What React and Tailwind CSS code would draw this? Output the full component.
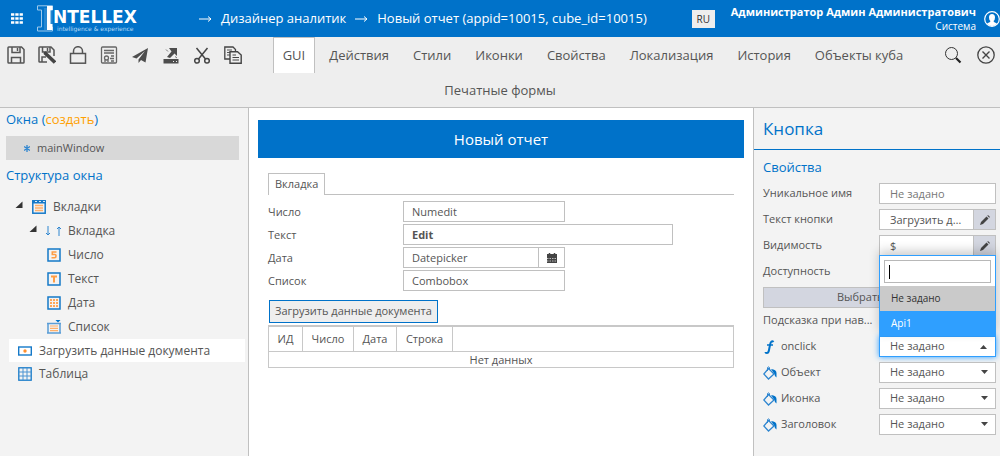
import React from "react";

const Svg = ({ w = 18, h = 18, children, className = "" }) => (
  <svg
    width={w}
    height={h}
    viewBox={`0 0 ${w} ${h}`}
    fill="none"
    className={`shrink-0 ${className}`}
    aria-hidden="true"
  >
    {children}
  </svg>
);

const Floppy = () => (
  <g stroke="#555" strokeWidth="1.5">
    <path d="M1 1.8Q1 1 1.8 1H14.5L17 3.500V16.200Q17 17 16.200 17H1.800Q1 17 1 16.200Z" />
    <path d="M5 1V6.500H13V1M10.500 2V5" />
    <path d="M4.500 17V11.500H13.500V17" />
  </g>
);

const toolbarIcons = [
  { title: "Сохранить", icon: <Svg><Floppy /></Svg> },
  {
    title: "Сохранить как",
    icon: (
      <Svg>
        <g stroke="#555" strokeWidth="1.5">
          <path d="M1 1.800Q1 1 1.800 1H13L16 4V10M1 1.800V15.500Q1 16 1.800 16H9" />
          <path d="M4.500 1V6H12V1M9.500 2V5M4 16V11H8" />
        </g>
        <path d="M6.500 6.500L17 16.500" stroke="#444" strokeWidth="3.500" />
        <path d="M5.500 5.500L7 9L9 7Z" fill="#444" />
      </Svg>
    ),
  },
  {
    title: "Блокировка",
    icon: (
      <Svg>
        <g stroke="#555" strokeWidth="1.5">
          <rect x="1.500" y="7.500" width="15" height="9.700" />
          <path d="M4.500 7.500V5.200A4.500 4.500 0 0 1 13.500 5.200V7.500" />
        </g>
      </Svg>
    ),
  },
  {
    title: "Сертификат",
    icon: (
      <Svg>
        <g stroke="#666" strokeWidth="1.3">
          <rect x="1.500" y="1" width="15" height="16" rx="1" />
          <path d="M4 4.500H14M4 7H14M11 10H14M10 12.500H14M11 15H14" />
          <circle cx="6.500" cy="12" r="2" />
          <path d="M5 14V16M8 14V16" />
        </g>
      </Svg>
    ),
  },
  {
    title: "Отправить",
    icon: (
      <Svg>
        <path d="M17 2L1 11L5.500 12.500L14 5L7.500 13.500V17L10 14L14.500 16.500Z" fill="#4d4d4d" />
      </Svg>
    ),
  },
  {
    title: "Выгрузить",
    icon: (
      <Svg>
        <path d="M1.500 13H16.500V17.500H1.500Z" fill="#4d4d4d" />
        <path d="M11 15.500H12M14 15.500H15" stroke="#eee" />
        <path d="M7 2H15V10L12.500 7.500L8 12L5 11L9.500 5.500Z" fill="#4d4d4d" />
        <path d="M4 3.500L6 5.500M13 10.500L15 12" stroke="#777" />
      </Svg>
    ),
  },
  {
    title: "Вырезать",
    icon: (
      <Svg>
        <g stroke="#444" strokeWidth="1.5">
          <path d="M3.500 2L12.500 13M14.500 2L5.500 13" />
          <circle cx="4" cy="14.800" r="2.300" />
          <circle cx="14" cy="14.800" r="2.300" />
        </g>
      </Svg>
    ),
  },
  {
    title: "Копировать",
    icon: (
      <Svg>
        <path d="M.8 1H9L11.500 3.500V13H.8Z" stroke="#444" strokeWidth="1.300" />
        <path d="M3 4H8M3 6.500H8M3 9H8" stroke="#555" />
        <path d="M6 5.800H13.500L17.200 9V17.200H6Z" fill="#eee" stroke="#444" strokeWidth="1.400" />
        <path d="M8.500 9H12M8.500 11.500H15M8.500 14H15" stroke="#444" />
      </Svg>
    ),
  },
];

const tabs = ["GUI", "Действия", "Стили", "Иконки", "Свойства", "Локализация", "История", "Объекты куба"];

const boxFrame = <rect x="1" y="1" width="12" height="12" stroke="#1579c8" strokeWidth="1.500" />;

const treeIcons = {
  tabs: (
    <Svg w={14} h={14}>
      <rect x=".8" y=".8" width="12.400" height="12.400" stroke="#1579c8" strokeWidth="1.500" />
      <path d="M0 2H14" stroke="#1579c8" strokeWidth="3" />
      <path d="M3 1.500H5M7 1.500H9M11 1.500H13" stroke="#dcebf7" />
      <path d="M3 5.500H11M3 8H11M3 10.500H11" stroke="#ffb06a" strokeWidth="1.300" />
    </Svg>
  ),
  number: (
    <Svg w={14} h={14}>
      {boxFrame}
      <path d="M9.500 4H5.300V6.500H8Q9 6.500 9 8Q9 9.800 7.500 9.800H4.500" stroke="#ff9d45" strokeWidth="1.600" />
    </Svg>
  ),
  text: (
    <Svg w={14} h={14}>
      {boxFrame}
      <path d="M4 4.500H10M7 4.500V10.500" stroke="#ff9d45" strokeWidth="2" />
    </Svg>
  ),
  date: (
    <Svg w={14} h={14}>
      {boxFrame}
      <path d="M3 4H11M3 7H11M3 10H11" stroke="#ffa85a" strokeWidth="2" strokeDasharray="2 1" />
    </Svg>
  ),
  list: (
    <Svg w={14} h={14}>
      <path d="M8.500 0H13.500L11 2.500Z" fill="#0072c9" />
      <path d="M0 3.500H14M0 13H14" stroke="#5a9dd6" strokeWidth="1.500" />
      <path d="M1 3.500V13M13 3.500V13" stroke="#5a9dd6" strokeWidth="1.500" />
      <path d="M3 6H11M3 8.300H11M3 10.600H11" stroke="#ffb06a" strokeWidth="1.200" />
    </Svg>
  ),
  button: (
    <Svg w={14} h={14}>
      <rect x=".7" y="3" width="12.600" height="8" stroke="#1579c8" strokeWidth="1.400" />
      <circle cx="7" cy="7" r="1.700" fill="#ff8f2e" />
    </Svg>
  ),
  table: (
    <Svg w={14} h={14}>
      <rect x=".8" y=".8" width="12.400" height="12.400" stroke="#1579c8" strokeWidth="1.300" />
      <path d="M5 1V13M9 1V13M1 5H13M1 9H13" stroke="#4a93d2" />
    </Svg>
  ),
};

const treeItems = [
  { label: "Число", icon: treeIcons.number },
  { label: "Текст", icon: treeIcons.text },
  { label: "Дата", icon: treeIcons.date },
  { label: "Список", icon: treeIcons.list },
];

const Expander = () => (
  <Svg w={8} h={8} className="self-start mt-[6px]">
    <path d="M7.500 .5V7H.5Z" fill="#333" />
  </Svg>
);

const Arrow = () => (
  <Svg w={13} h={8}>
    <path d="M0 4H12M9 1.500L12 4L9 6.500" stroke="#fff" />
  </Svg>
);

const Header = () => (
  <header className="flex h-[37px] items-center bg-[#0072c9] text-white">
    <button type="button" aria-label="Меню" className="ml-[11px]">
      <Svg w={12} h={11}>
        <path d="M0 1.500H12M0 5.500H12M0 9.500H12" stroke="#fff" strokeWidth="2.500" strokeDasharray="3.300 1" />
      </Svg>
    </button>
    <div className="ml-[14px] flex w-[160px] font-['DejaVu_Sans',sans-serif]">
      <Svg w={16} h={27}>
        <path d="M.5 .8H15.500V5H12V22H15.500V26H.5V22H4.500V5H.5Z" stroke="#9cc9ec" />
        <path d="M7 3H15.500V23H11V25H7Z" fill="#fff" opacity=".15" />
        <path d="M10 1H15.500V5H13.500V19H15.500V25H10Z" fill="#fff" />
      </Svg>
      <div className="whitespace-nowrap">
        <div className="mt-[3px] text-[17px] leading-[18px] font-bold">NTELLEX</div>
        <div className="ml-1 text-[6px] leading-[6px] text-[#b5d8f3]">intelligence &amp; experience</div>
      </div>
    </div>
    <nav className="ml-[2px] flex items-center gap-[9px] text-[13px] whitespace-nowrap">
      <Arrow />
      <a href="#designer">Дизайнер аналитик</a>
      <Arrow />
      <a href="#report">Новый отчет (appid=10015, cube_id=10015)</a>
    </nav>
    <button type="button" className="ml-auto h-[18px] w-[23px] bg-[#eee] text-[10px] leading-[18px] text-[#333]">
      RU
    </button>
    <div className="ml-4 text-right whitespace-nowrap">
      <div className="text-[11px] leading-[15px] font-bold">Администратор Админ Администратович</div>
      <div className="text-[10px] leading-[14px]">Система</div>
    </div>
    <Svg w={16} h={16} className="ml-[8px]">
      <circle cx="8" cy="8" r="7.300" stroke="#fff" strokeWidth="1.200" />
      <path
        d="M8 3Q11 3 11 6.500Q11 9 9.500 10Q9.500 11 13 12.500Q11 15 8 15Q5 15 3 12.500Q6.500 11 6.500 10Q5 9 5 6.500Q5 3 8 3Z"
        fill="#fff"
      />
    </Svg>
  </header>
);

const Toolbar = () => (
  <div className="h-[71px] border-b border-[#c0c0c0] bg-[#eee]">
    <div className="flex h-9 items-center">
      <div className="ml-[7px] flex gap-[13px]">
        {toolbarIcons.map((item) => (
          <button key={item.title} type="button" title={item.title}>
            {item.icon}
          </button>
        ))}
      </div>
      <nav className="flex flex-1 justify-center gap-1 text-[13px] leading-[35px] whitespace-nowrap">
        {tabs.map((tab, index) => (
          <a
            key={tab}
            href="#tab"
            className={
              index === 0
                ? "border border-b-0 border-[#c0c0c0] bg-white px-[9px]"
                : "border border-b-0 border-transparent px-[9px]"
            }
          >
            {tab}
          </a>
        ))}
      </nav>
      <div className="mr-[5px] flex items-center gap-[15px]">
        <button type="button" title="Поиск">
          <Svg>
            <circle cx="7.500" cy="7.500" r="6" stroke="#333" />
            <path d="M12 12L16.500 16.500" stroke="#222" strokeWidth="2.200" />
          </Svg>
        </button>
        <button type="button" title="Закрыть">
          <Svg>
            <circle cx="9" cy="9" r="8.200" stroke="#444" strokeWidth="1.300" />
            <path d="M5.500 5.500L12.500 12.500M12.500 5.500L5.500 12.500" stroke="#444" strokeWidth="1.400" />
          </Svg>
        </button>
      </div>
    </div>
    <nav className="text-center text-[13px] leading-[34px]">
      <a href="#print">Печатные формы</a>
    </nav>
  </div>
);

const LeftPanel = () => (
  <aside className="w-[249px] shrink-0 border-r border-[#c0c0c0] bg-[#f3f3f3]">
    <h2 className="px-[6px] pt-px text-[13px] leading-5 text-[#0072c9]">
      Окна (<a href="#create" className="text-[#ffa000]">создать</a>)
    </h2>
    <div className="mt-[7px] mr-[9px] ml-[6px] flex h-6 items-center gap-[7px] bg-[#d8d8d8] pl-[18px] text-[11px]">
      <Svg w={6} h={7}>
        <path d="M3 0V7M0 1.500L6 5.500M6 1.500L0 5.500" stroke="#2f86d0" strokeWidth="1.300" />
      </Svg>
      mainWindow
    </div>
    <h2 className="mt-[5px] px-[6px] text-[13px] leading-5 text-[#0072c9]">Структура окна</h2>
    <ul className="mt-[10px] mr-[3px] ml-[9px] text-xs whitespace-nowrap">
      <li className="flex h-6 items-center pl-[6px]">
        <Expander />
        <span className="ml-[9px] flex items-center gap-[7px]">
          {treeIcons.tabs}
          Вкладки
        </span>
      </li>
      <li className="flex h-6 items-center pl-5">
        <Expander />
        <span className="ml-[8px] flex items-center gap-[7px]">
          <Svg w={16} h={10}>
            <path d="M3 0V9M1 7L3 9L5 7M14 10V1M12 3L14 1L16 3" stroke="#2f86d0" />
          </Svg>
          Вкладка
        </span>
      </li>
      {treeItems.map((item) => (
        <li key={item.label} className="flex h-6 items-center gap-[7px] pl-[38px]">
          {item.icon}
          {item.label}
        </li>
      ))}
      <li className="flex h-[23px] items-center gap-[7px] bg-white pl-[9px]">
        {treeIcons.button}
        Загрузить данные документа
      </li>
      <li className="flex h-6 items-center gap-[7px] pl-[9px]">
        {treeIcons.table}
        Таблица
      </li>
    </ul>
  </aside>
);

const fieldClass = "h-[21px] border border-[#c0c0c0] bg-white px-2 outline-none";

const Canvas = () => (
  <main className="min-w-0 flex-1 bg-white px-[9px] pt-3">
    <h1 className="h-[38px] bg-[#0072c9] text-center text-[15px] leading-[38px] text-white">Новый отчет</h1>
    <div className="mt-[15px] mr-[10px] ml-[10px] text-[11px]">
      <div className="flex border-b border-[#c0c0c0]">
        <button type="button" className="-mb-px h-[22px] border border-b-0 border-[#c0c0c0] bg-white px-[6px]">
          Вкладка
        </button>
      </div>
      <div className="mt-[6px] grid grid-cols-[135px_1fr] gap-y-[2px] leading-[21px]">
        <label htmlFor="num">Число</label>
        <input id="num" defaultValue="Numedit" className={`${fieldClass} w-[162px]`} />
        <label htmlFor="txt">Текст</label>
        <input id="txt" defaultValue="Edit" className={`${fieldClass} w-[270px] font-bold`} />
        <label htmlFor="date">Дата</label>
        <div className="flex w-[162px]">
          <input id="date" defaultValue="Datepicker" className={`${fieldClass} min-w-0 flex-1`} />
          <button
            type="button"
            aria-label="Календарь"
            className="flex w-[26px] items-center justify-center border border-l-0 border-[#c0c0c0]"
          >
            <Svg w={10} h={10}>
              <path d="M0 1H10V10H0Z" fill="#444" />
              <path d="M2.500 0V2M7.500 0V2" stroke="#444" strokeWidth="1.500" />
              <path d="M0 5.500H10M0 8H10" stroke="#bbb" strokeDasharray="1.500 1" />
            </Svg>
          </button>
        </div>
        <label htmlFor="list">Список</label>
        <input id="list" defaultValue="Combobox" className={`${fieldClass} w-[162px]`} />
      </div>
      <button
        type="button"
        className="mt-[9px] ml-px block h-[23px] border border-[#0072c9] bg-[#eee] px-[5px]"
      >
        Загрузить данные документа
      </button>
      <table className="mt-[2px] w-full border-collapse border border-t-2 border-[#c8c8c8]">
        <thead>
          <tr className="h-[25px]">
            <th className="w-[34px] border border-[#c8c8c8] font-normal">ИД</th>
            <th className="w-[51px] border border-[#c8c8c8] font-normal">Число</th>
            <th className="w-[43px] border border-[#c8c8c8] font-normal">Дата</th>
            <th className="w-[56px] border border-[#c8c8c8] font-normal">Строка</th>
            <th className="border border-[#c8c8c8]"></th>
          </tr>
        </thead>
        <tbody>
          <tr>
            <td colSpan={5} className="text-center leading-[15px]">
              Нет данных
            </td>
          </tr>
        </tbody>
      </table>
    </div>
  </main>
);

const Row = ({ label, id, icon, children }) => (
  <div className="flex h-[21px] items-center">
    <label htmlFor={id} className="flex w-[116px] shrink-0 items-center gap-[4px] whitespace-nowrap">
      {icon}
      {label}
    </label>
    {children}
  </div>
);

const EditField = ({ id, value }) => (
  <div className="flex min-w-0 flex-1">
    <input
      id={id}
      defaultValue={value}
      className="h-[21px] min-w-0 flex-1 border border-[#c0c0c0] bg-white px-[10px] text-ellipsis outline-none"
    />
    <button
      type="button"
      aria-label="Редактировать"
      className="flex w-[22px] items-center justify-center border border-l-0 border-[#c0c0c0] bg-[#d3d6e0]"
    >
      <Svg w={10} h={10}>
        <path d="M0 10L1 7L6.500 1.500L8.500 3.500L3 9Z" fill="#444" />
        <path d="M7.300 .8L8 0L10 2L9.200 2.700Z" fill="#444" />
      </Svg>
    </button>
  </div>
);

const SelectField = ({ id }) => (
  <div className="relative min-w-0 flex-1">
    <select
      id={id}
      className="block h-[21px] w-full appearance-none border border-[#c0c0c0] bg-white px-[10px] outline-none"
    >
      <option>Не задано</option>
      <option>Api1</option>
    </select>
    <Svg w={7} h={4} className="pointer-events-none absolute top-2 right-2">
      <path d="M0 0H7L3.500 4Z" fill="#444" />
    </Svg>
  </div>
);

const FuncIcon = () => (
  <Svg w={14} h={14}>
    <path
      d="M10.500 2Q9.500 .8 8.500 1.500Q7.500 2.200 7 5L6 10Q5.500 13 3.800 13Q2.500 13 2.500 12"
      stroke="#0072c9"
      strokeWidth="2"
    />
    <path d="M4 5H10" stroke="#0072c9" strokeWidth="1.500" />
  </Svg>
);

const BucketIcon = () => (
  <Svg w={14} h={14}>
    <path d="M5.500 2.500L11 8L5.500 13L.8 8Z" stroke="#2f86d0" strokeWidth="1.300" />
    <path d="M4.500 5V1.500Q5.500 .3 6.500 1.500V4" stroke="#2f86d0" />
    <path d="M8 3Q13.500 3.500 13.500 7V11.500Q11.500 11 11.500 8Z" fill="#0072c9" />
  </Svg>
);

const Dropdown = () => (
  <div className="relative min-w-0 flex-1">
    <button
      id="onclick"
      type="button"
      className="flex h-[21px] w-full items-center justify-between border border-[#2f9fff] bg-white pr-2 pl-[10px] shadow-[0_0_6px_#2f9fff]"
    >
      Не задано
      <Svg w={7} h={4}>
        <path d="M0 4H7L3.500 0Z" fill="#444" />
      </Svg>
    </button>
    <div className="absolute right-0 bottom-full left-0 border border-b-0 border-[#2f9fff] bg-white text-[10px] shadow-[0_-4px_10px_rgba(0,0,0,0.2)]">
      <div className="px-1 pt-1 pb-[3px]">
        <div className="flex h-[23px] items-center border border-[#b8b8b8] pl-1">
          <span className="h-[14px] w-px bg-black"></span>
          <input aria-label="Поиск" className="min-w-0 flex-1 outline-none" />
        </div>
      </div>
      <ul role="listbox">
        <li role="option" aria-selected="false" className="bg-[#cacaca] pl-[11px] leading-[25px] text-[#333]">
          Не задано
        </li>
        <li role="option" aria-selected="true" className="bg-[#2f9fff] pl-[11px] leading-[25px] text-white">
          Api1
        </li>
      </ul>
    </div>
  </div>
);

const RightPanel = () => (
  <aside className="w-[247px] shrink-0 border-l border-[#c0c0c0] bg-[#f3f3f3] text-[11px]">
    <h2 className="h-[42px] border-b border-[#0072c9] pl-[9px] text-[17px] leading-[42px] text-[#0072c9]">Кнопка</h2>
    <h3 className="mt-[7px] pl-[9px] text-[13px] leading-5 text-[#0072c9]">Свойства</h3>
    <div className="mt-[6px] mr-[4px] ml-[9px] flex flex-col gap-[5px]">
      <Row label="Уникальное имя" id="uid">
        <input
          id="uid"
          placeholder="Не задано"
          className="h-[21px] min-w-0 flex-1 border border-[#c0c0c0] bg-white px-[10px] outline-none placeholder:text-[#777]"
        />
      </Row>
      <Row label="Текст кнопки" id="caption">
        <EditField id="caption" value="Загрузить данные документа" />
      </Row>
      <Row label="Видимость" id="visible">
        <EditField id="visible" value="$" />
      </Row>
      <Row label="Доступность" id="enabled">
        <EditField id="enabled" value="" />
      </Row>
      <button type="button" className="h-[21px] border border-[#c0c0c0] bg-[#d3d6e0] pl-[73px] text-left">
        Выбрать
      </button>
    </div>
    <div className="mt-[2px] mr-[4px] ml-[9px] flex flex-col gap-[5px]">
      <Row label="Подсказка при нав..." id="hint">
        <EditField id="hint" value="" />
      </Row>
      <Row label="onclick" id="onclick" icon={<FuncIcon />}>
        <Dropdown />
      </Row>
      <Row label="Объект" id="object" icon={<BucketIcon />}>
        <SelectField id="object" />
      </Row>
      <Row label="Иконка" id="icon" icon={<BucketIcon />}>
        <SelectField id="icon" />
      </Row>
      <Row label="Заголовок" id="title" icon={<BucketIcon />}>
        <SelectField id="title" />
      </Row>
    </div>
  </aside>
);

const App = () => {
  return (
    <div className="flex min-h-screen flex-col overflow-x-hidden font-['Open_Sans',sans-serif] text-[#555]">
      <Header />
      <Toolbar />
      <div className="flex flex-1">
        <LeftPanel />
        <Canvas />
        <RightPanel />
      </div>
    </div>
  );
};

export default App;
